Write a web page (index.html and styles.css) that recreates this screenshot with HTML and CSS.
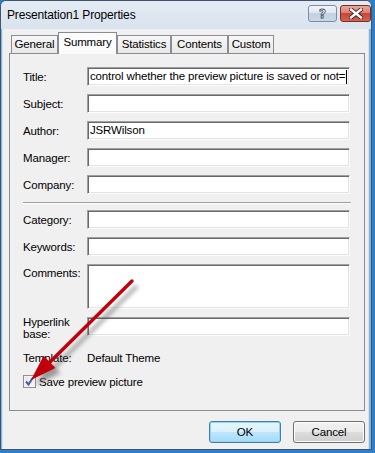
FILE: index.html
```html
<!DOCTYPE html>
<html>
<head>
<meta charset="utf-8">
<link rel="stylesheet" href="styles.css">
</head>
<body>
<div class="window">
  <div class="titlebar">
    <span class="title">Presentation1 Properties</span>
    <div class="caption">
      <span class="cbtn help"><span class="q">?</span></span>
      <span class="cbtn close">
        <svg width="14" height="11" viewBox="0 0 14 11">
          <path d="M2 1.5 L12 9.5 M12 1.5 L2 9.5" stroke="#4a1a14" stroke-width="4.2" stroke-linecap="square"/>
          <path d="M2 1.5 L12 9.5 M12 1.5 L2 9.5" stroke="#ffffff" stroke-width="2.4" stroke-linecap="square"/>
        </svg>
      </span>
    </div>
  </div>
  <div class="client">
    <div class="tabs">
      <span class="tab t-general">General</span>
      <span class="tab active t-summary">Summary</span>
      <span class="tab t-stats">Statistics</span>
      <span class="tab t-contents">Contents</span>
      <span class="tab t-custom">Custom</span>
    </div>
    <div class="panel">
      <div class="row"><span class="lbl">Title:</span><div class="field">control whether the preview picture is saved or not=<span class="caret"></span></div></div>
      <div class="row"><span class="lbl">Subject:</span><div class="field"></div></div>
      <div class="row"><span class="lbl">Author:</span><div class="field">JSRWilson</div></div>
      <div class="row"><span class="lbl">Manager:</span><div class="field"></div></div>
      <div class="row"><span class="lbl">Company:</span><div class="field"></div></div>
      <div class="sep"></div>
      <div class="row"><span class="lbl">Category:</span><div class="field"></div></div>
      <div class="row"><span class="lbl">Keywords:</span><div class="field"></div></div>
      <div class="row top"><span class="lbl">Comments:</span><div class="field tall"></div></div>
      <div class="row gap10 top"><span class="lbl two">Hyperlink<br>base:</span><div class="field"></div></div>
      <div class="row"><span class="lbl">Template:</span><span class="value">Default Theme</span></div>
      <div class="check">
        <span class="box">
          <svg width="11" height="11" viewBox="0 0 11 11"><path d="M2 5.5 L4.5 8.5 L9 1.5" fill="none" stroke="#4a5f97" stroke-width="2"/></svg>
        </span>
        <span>Save preview picture</span>
      </div>
    </div>
    <div class="buttons">
      <span class="btn default">OK</span>
      <span class="btn">Cancel</span>
    </div>
  </div>
  <svg class="arrow" width="375" height="453" viewBox="0 0 375 453">
    <defs>
      <filter id="blur" x="-20%" y="-20%" width="140%" height="140%"><feGaussianBlur stdDeviation="2"/></filter>
    </defs>
    <g transform="translate(5,5)" filter="url(#blur)" opacity="0.55">
      <path d="M132 281 L50 362" stroke="#555" stroke-width="3.5" fill="none"/>
      <path d="M31 380 L43.6 355.7 L55.5 367.9 Z" fill="#555"/>
    </g>
    <path d="M132 281 L50 362" stroke="#c0000a" stroke-width="3.4" stroke-linecap="round" fill="none"/>
    <path d="M31 380 L43.6 355.7 L55.5 367.9 Z" fill="#c0000a"/>
  </svg>
</div>
</body>
</html>
```
FILE: styles.css
```css
html, body {
  margin: 0;
  padding: 0;
}
body {
  width: 375px;
  height: 453px;
  background: #2f7fc8;
  font-family: "Liberation Sans", Arial, sans-serif;
  font-size: 11.5px;
  letter-spacing: -0.15px;
  color: #000;
  overflow: hidden;
}
.window {
  position: relative;
  width: 372px;
  height: 450px;
  background: #7fb3e0;
  border: 1px solid #3e556d;
  border-radius: 6px 6px 0 0;
  box-sizing: border-box;
  display: flex;
  flex-direction: column;
}
.titlebar {
  height: 28px;
  display: flex;
  align-items: center;
  justify-content: space-between;
  padding: 0 0 0 6px;
  background: linear-gradient(#e4ebf3, #d9e3ee);
  border-radius: 5px 5px 0 0;
}
.title {
  font-size: 12px;
  margin-top: -1px;
}
.caption {
  display: flex;
  gap: 3px;
  align-self: flex-start;
  margin-top: 4px;
  margin-right: 0;
}
.cbtn {
  height: 17px;
  box-sizing: border-box;
  border-radius: 3px;
  display: flex;
  align-items: center;
  justify-content: center;
}
.help {
  width: 29px;
  border: 1px solid #7d8ea3;
  background: linear-gradient(#f1f5fa 0%, #dfe7f1 45%, #c3d1e1 50%, #c9d8e8 100%);
}
.help .q {
  font-family: "DejaVu Sans", sans-serif;
  font-weight: bold;
  font-size: 12px;
  color: #fff;
  -webkit-text-stroke: 0.8px #3f4e62;
  line-height: 12px;
}
.close {
  width: 31px;
  border: 1px solid #7a2e25;
  background: linear-gradient(#e9a89c 0%, #dc7f70 45%, #c8473a 50%, #d2614f 100%);
}
.client {
  flex: 1;
  margin: 0 2px 0 1px;
  background: #f0f0f0;
  display: flex;
  flex-direction: column;
  border-left: 1px solid #d4e3f1;
  border-right: 1px solid #d4e3f1;
}
.tabs {
  display: flex;
  align-items: flex-end;
  height: 25px;
  padding-left: 8px;
  margin-bottom: -1px;
  position: relative;
  z-index: 1;
}
.tab {
  box-sizing: border-box;
  height: 18px;
  margin-bottom: 1px;
  border: 1px solid #898c95;
  border-bottom: none;
  background: linear-gradient(#f7f7f7, #e8e8e8);
  text-align: center;
  line-height: 17px;
}
.tab.active {
  height: 22px;
  margin-bottom: 0;
  background: #fbfbfb;
  line-height: 18px;
  border-color: #898c95;
}
.t-general { width: 47px; }
.t-summary { width: 59px; }
.t-stats { width: 54px; }
.t-contents { width: 57px; }
.t-custom { width: 46px; }
.panel {
  margin-left: 6px;
  width: 356px;
  height: 358px;
  box-sizing: border-box;
  border: 1px solid #898c95;
  background: #f0f0f0;
  padding: 13px 13px 0 13px;
}
.row {
  display: flex;
  align-items: center;
  min-height: 19px;
  margin-bottom: 8px;
}
.row.top {
  align-items: flex-start;
}
.lbl {
  width: 64px;
  flex: none;
}
.row.top .lbl {
  padding-top: 3px;
}
.row.top .lbl.two {
  padding-top: 0;
  line-height: 12px;
  margin-top: -1px;
}
.gap10 {
  margin-top: 2px;
}
.field {
  width: 263px;
  height: 19px;
  box-sizing: border-box;
  background: #fff;
  border: 1px solid;
  border-color: #a0a0a0 #fcfcfc #fcfcfc #a0a0a0;
  box-shadow: inset 1px 1px #696969, inset -1px -1px #e3e3e3;
  padding: 0 1px 0 2px;
  line-height: 17px;
  white-space: nowrap;
  overflow: hidden;
  display: flex;
  align-items: center;
}
.field.tall {
  height: 45px;
}
.caret {
  display: inline-block;
  flex: none;
  width: 1px;
  height: 14px;
  background: #000;
  margin-left: 1px;
}
.sep {
  border-top: 1px solid #a0a0a0;
  border-bottom: 1px solid #fff;
  margin: 2px 0 6px 0;
  height: 0;
}
.check {
  display: flex;
  align-items: center;
  gap: 3px;
  margin-top: 7px;
}
.box {
  width: 13px;
  height: 13px;
  box-sizing: border-box;
  border: 1px solid #8f8f8f;
  background: linear-gradient(135deg, #dde6f2, #fbfcfd);
  box-shadow: inset 0 0 0 1px #f4f4f4;
  display: flex;
  align-items: center;
  justify-content: center;
}
.buttons {
  display: flex;
  justify-content: flex-end;
  gap: 12px;
  padding-right: 3px;
  margin-top: 10px;
}
.btn {
  width: 72px;
  height: 22px;
  box-sizing: border-box;
  border: 1px solid #707070;
  border-radius: 3px;
  background: linear-gradient(#f2f2f2 0%, #ebebeb 49%, #dddddd 50%, #cfcfcf 100%);
  box-shadow: inset 0 0 0 1px #fbfbfb;
  text-align: center;
  line-height: 20px;
}
.btn.default {
  border-color: #3c7fb1;
  background: linear-gradient(#eaf6fd 0%, #d9f0fc 49%, #bee6fd 50%, #a7d9f5 100%);
  box-shadow: inset 0 0 0 1px #8fd4f5;
}
.arrow {
  position: absolute;
  left: -1px;
  top: -1px;
  pointer-events: none;
  z-index: 5;
}
```
